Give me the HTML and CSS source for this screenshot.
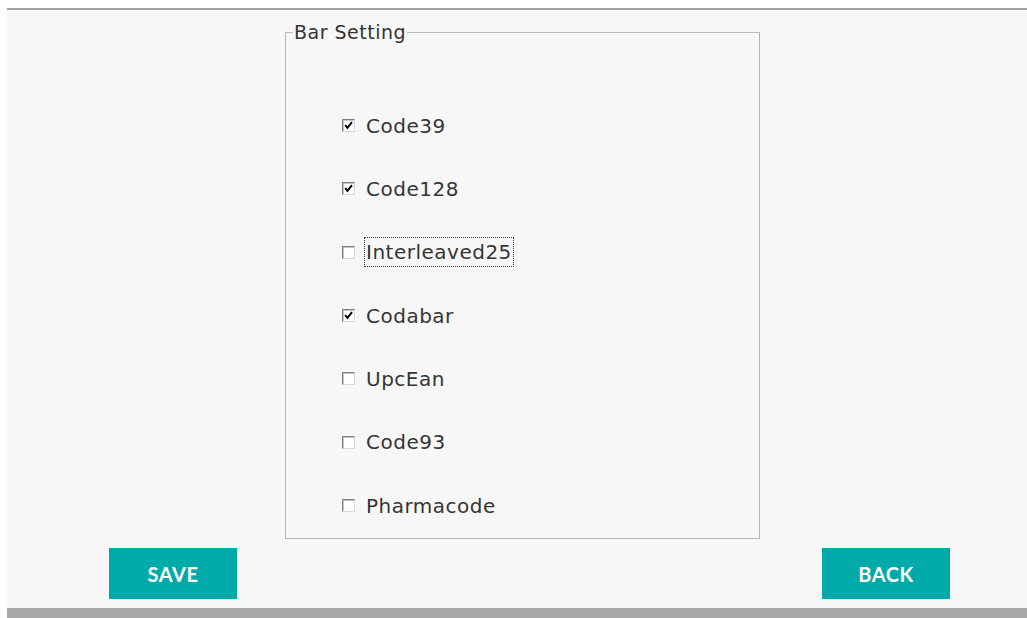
FILE: index.html
```html
<!DOCTYPE html>
<html>
<head>
<meta charset="utf-8">
<title>Bar Setting</title>
<link rel="stylesheet" href="styles.css">
</head>
<body>
<div class="screen">
  <div class="top-rule"></div>
  <main class="content">
    <fieldset class="group">
      <legend class="group-title">Bar Setting</legend>
      <div class="options">
        <label class="option"><span class="box checked"><svg viewBox="0 0 9 9"><path d="M1.2 4 L3.4 6.8 L8 1.2" /></svg></span><span class="text">Code39</span></label>
        <label class="option"><span class="box checked"><svg viewBox="0 0 9 9"><path d="M1.2 4 L3.4 6.8 L8 1.2" /></svg></span><span class="text">Code128</span></label>
        <label class="option"><span class="box"></span><span class="text focused">Interleaved25</span></label>
        <label class="option"><span class="box checked"><svg viewBox="0 0 9 9"><path d="M1.2 4 L3.4 6.8 L8 1.2" /></svg></span><span class="text">Codabar</span></label>
        <label class="option"><span class="box"></span><span class="text">UpcEan</span></label>
        <label class="option"><span class="box"></span><span class="text">Code93</span></label>
        <label class="option"><span class="box"></span><span class="text">Pharmacode</span></label>
      </div>
    </fieldset>
    <div class="actions">
      <button class="btn">SAVE</button>
      <button class="btn">BACK</button>
    </div>
  </main>
  <div class="bottom-bar"></div>
</div>
</body>
</html>
```

FILE: styles.css
```css
html, body {
  margin: 0;
  padding: 0;
  background: #ffffff;
}

.screen {
  width: 1027px;
  height: 618px;
  padding-top: 8px;
  padding-left: 7px;
  box-sizing: border-box;
  display: flex;
  flex-direction: column;
  font-family: "DejaVu Sans", "Noto Sans", sans-serif;
  color: #353535;
}

.top-rule {
  height: 2px;
  background: #a3a3a3;
  flex: none;
}

.content {
  flex: 1;
  background: #f7f7f7;
  display: flex;
  flex-direction: column;
  padding-top: 11px;
}

.group {
  margin: 0 0 0 278px;
  padding: 0;
  width: 475px;
  height: 518px;
  box-sizing: border-box;
  border: 1px solid #b4b4b4;
  border-top-color: #bcbcbc;
}

.group-title {
  margin-left: 7px;
  padding: 0 1px 0 1px;
  font-size: 19px;
  line-height: 22px;
  letter-spacing: 0.5px;
  color: #333;
}

.options {
  display: grid;
  grid-auto-rows: 63.33px;
  padding-top: 51px;
  padding-left: 56px;
}

.option {
  display: flex;
  align-items: center;
  gap: 10px;
}

.box {
  width: 13px;
  height: 13px;
  box-sizing: border-box;
  background: #ffffff;
  border: 1px solid #808080;
  border-right-color: #d8d8d8;
  border-bottom-color: #d8d8d8;
  box-shadow: inset 1px 1px 0 #c4c4c4;
  display: flex;
  align-items: center;
  justify-content: center;
}

.box svg {
  width: 9px;
  height: 9px;
}

.box svg path {
  fill: none;
  stroke: #000;
  stroke-width: 2;
}

.text {
  font-size: 20px;
  line-height: 28px;
  letter-spacing: 0.5px;
  padding: 0 1px;
  color: #353535;
}

.text.focused {
  outline: 1px dotted #333;
  outline-offset: 0;
}

.actions {
  display: flex;
  justify-content: space-between;
  margin-top: 9px;
  padding-left: 102px;
  padding-right: 77px;
}

.btn {
  width: 128px;
  height: 51px;
  border: none;
  background: #00aaa8;
  color: #ffffff;
  font-family: "Lato", "Noto Sans", sans-serif;
  font-weight: 700;
  font-size: 20px;
  letter-spacing: 0.5px;
  padding: 0;
}

.bottom-bar {
  height: 10px;
  background: #a8a8a8;
  flex: none;
}
```
